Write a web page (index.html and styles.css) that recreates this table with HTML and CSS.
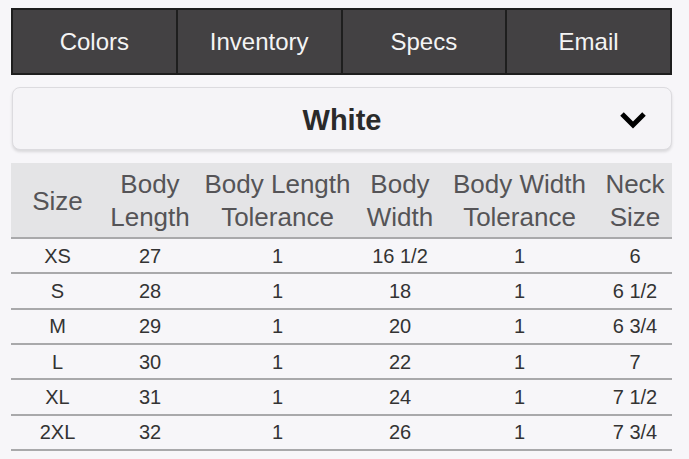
FILE: index.html
```html
<!DOCTYPE html>
<html>
<head>
<meta charset="utf-8">
<link rel="stylesheet" href="styles.css">
</head>
<body>
<div class="page">
  <nav class="tabs">
    <div class="tab">Colors</div>
    <div class="tab">Inventory</div>
    <div class="tab">Specs</div>
    <div class="tab">Email</div>
  </nav>
  <div class="select">
    <span class="select-label">White</span>
    <svg class="chev" width="28" height="18" viewBox="0 0 28 18"><path d="M3 3 L14 14 L25 3" fill="none" stroke="#000" stroke-width="5" stroke-linecap="butt" stroke-linejoin="miter"/></svg>
  </div>
  <table class="specs">
    <colgroup>
      <col class="c1"><col class="c2"><col class="c3"><col class="c4"><col class="c5"><col class="c6">
    </colgroup>
    <thead>
      <tr><th>Size</th><th>Body<br>Length</th><th>Body Length<br>Tolerance</th><th>Body<br>Width</th><th>Body Width<br>Tolerance</th><th>Neck<br>Size</th></tr>
    </thead>
    <tbody>
      <tr><td>XS</td><td>27</td><td>1</td><td>16 1/2</td><td>1</td><td>6</td></tr>
      <tr><td>S</td><td>28</td><td>1</td><td>18</td><td>1</td><td>6 1/2</td></tr>
      <tr><td>M</td><td>29</td><td>1</td><td>20</td><td>1</td><td>6 3/4</td></tr>
      <tr><td>L</td><td>30</td><td>1</td><td>22</td><td>1</td><td>7</td></tr>
      <tr><td>XL</td><td>31</td><td>1</td><td>24</td><td>1</td><td>7 1/2</td></tr>
      <tr><td>2XL</td><td>32</td><td>1</td><td>26</td><td>1</td><td>7 3/4</td></tr>
    </tbody>
  </table>
</div>
</body>
</html>
```

FILE: styles.css
```css
html, body {
  margin: 0;
  padding: 0;
  background: #f7f6f9;
  font-family: "Liberation Sans", Arial, sans-serif;
}
.page {
  padding: 8px 17px 0 11px;
  display: flex;
  flex-direction: column;
}
.tabs {
  display: flex;
  height: 67px;
  box-sizing: border-box;
  background: #434143;
  border: 2px solid #1e1e1e;
}
.tab {
  flex: 1;
  display: flex;
  align-items: center;
  justify-content: center;
  color: #f4f4f4;
  font-size: 24px;
  border-left: 2px solid #1e1e1e;
}
.tab:first-child {
  border-left: none;
}
.select {
  margin-top: 12px;
  margin-left: 1px;
  height: 63px;
  box-sizing: border-box;
  padding-top: 3px;
  background: #f5f4f7;
  border: 1px solid #dcdbdf;
  border-radius: 8px;
  box-shadow: 0 2px 3px rgba(0,0,0,0.12);
  display: flex;
  align-items: center;
  justify-content: center;
  position: relative;
}
.select-label {
  font-weight: bold;
  font-size: 29px;
  color: #2a2a2a;
}
.chev {
  position: absolute;
  right: 24px;
  top: 23px;
}
.specs {
  margin-top: 13px;
  width: 661px;
  border-collapse: collapse;
  table-layout: fixed;
}
.c1 { width: 93px; }
.c2 { width: 92px; }
.c3 { width: 163px; }
.c4 { width: 82px; }
.c5 { width: 157px; }
.c6 { width: 74px; }
.specs th {
  background: #e4e4e6;
  color: #555457;
  font-weight: normal;
  font-size: 26px;
  line-height: 33px;
  height: 72px;
  padding: 2px 0 0;
  text-align: center;
  border-bottom: 2px solid #a9a9ab;
  white-space: nowrap;
}
.specs td {
  color: #333;
  font-size: 20px;
  height: 32.33px;
  padding: 1px 0 0;
  text-align: center;
  border-bottom: 2px solid #a9a9ab;
}
```
